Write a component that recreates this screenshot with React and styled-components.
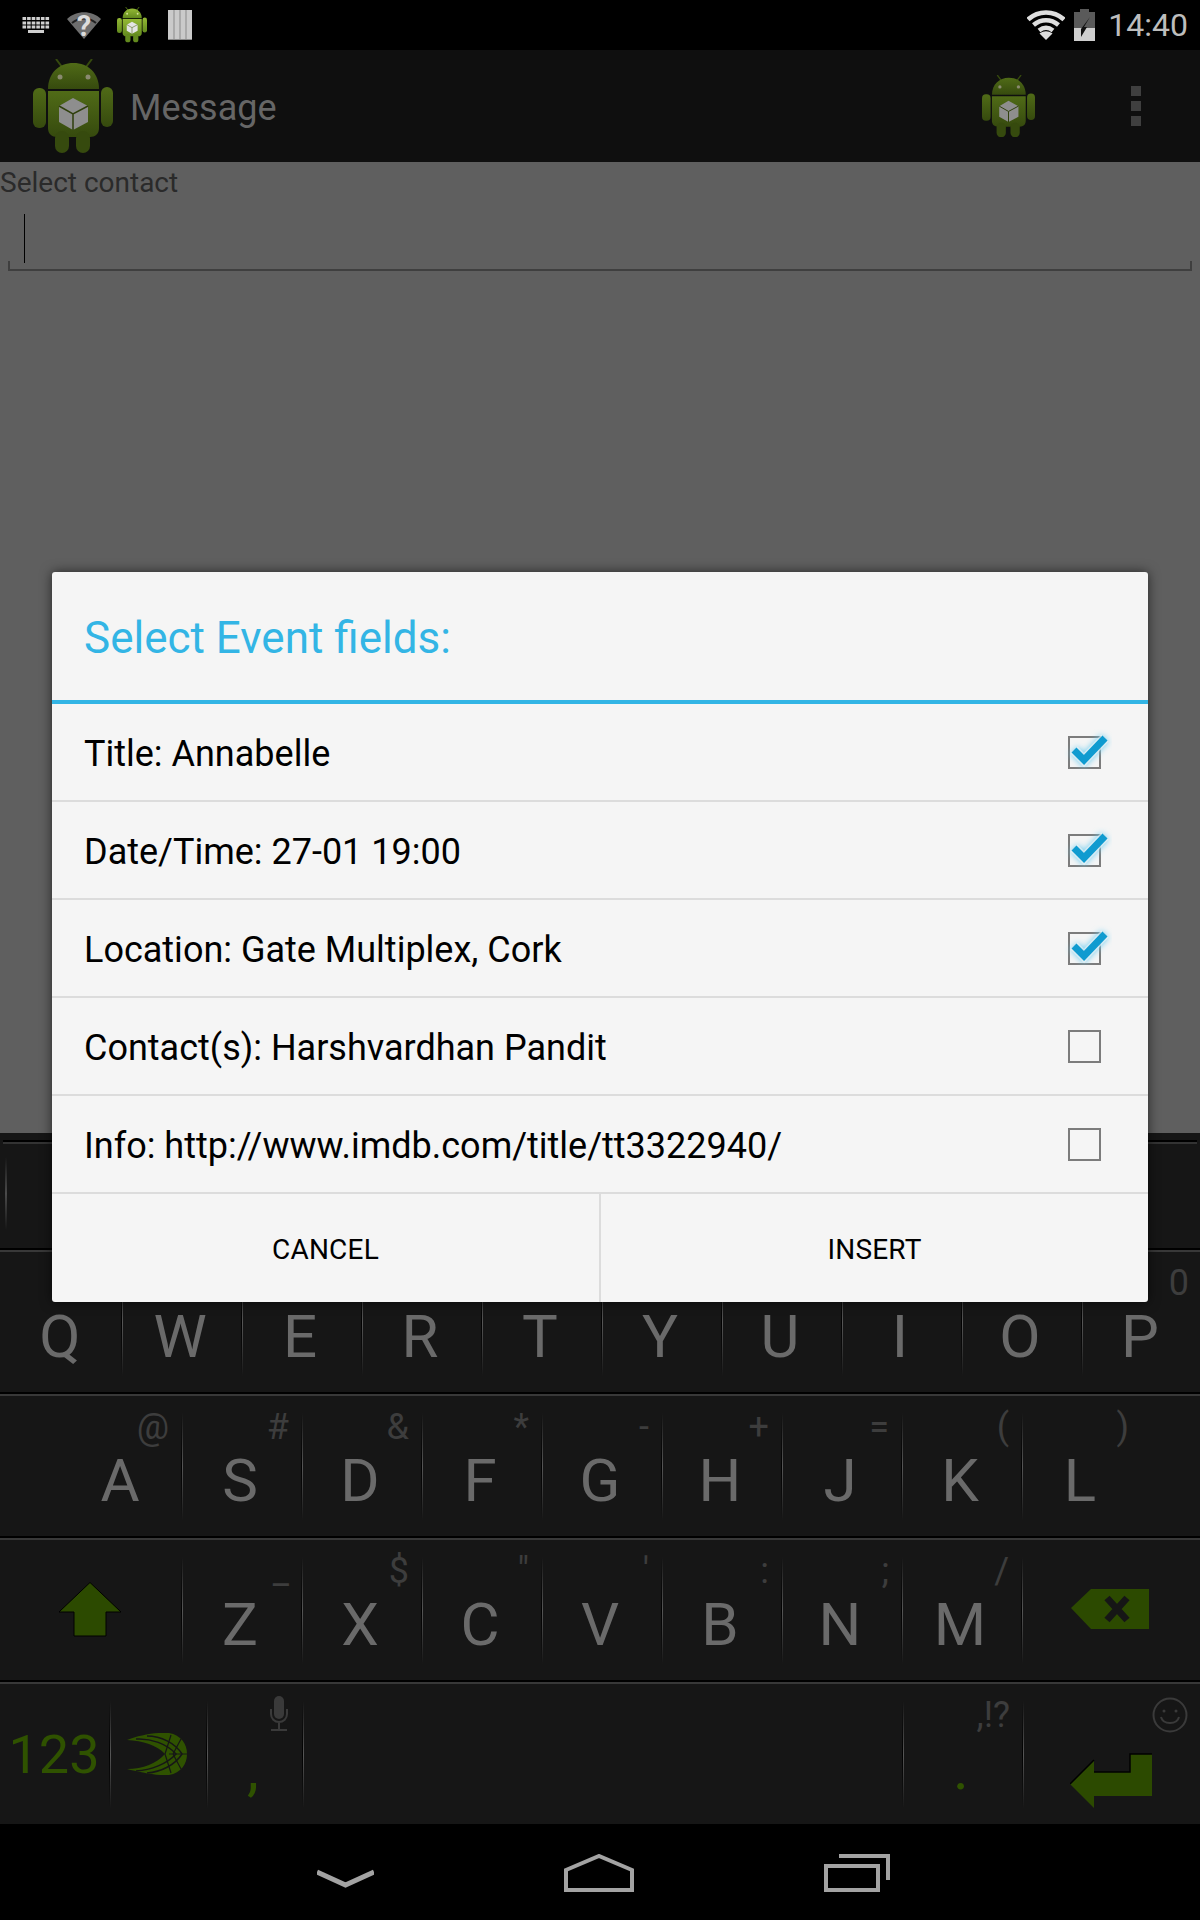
import styled, { createGlobalStyle } from 'styled-components';

const GlobalStyle = createGlobalStyle`
    html, body {
        margin: 0;
        padding: 0;
        background: #000;
        font-family: Roboto, "Liberation Sans", sans-serif;
    }
    * {
        box-sizing: border-box;
    }
`;

const Screen = styled.div`
    position: relative;
    width: 1200px;
    height: 1920px;
    overflow: hidden;
    display: flex;
    flex-direction: column;
    background: #5f5f5f;
`;

const StatusBar = styled.div`
    flex: 0 0 50px;
    background: #000;
    display: flex;
    align-items: center;
    padding: 0 12px 0 22px;
`;

const StatusIcon = styled.span`
    position: relative;
    display: flex;
    margin-left: ${(p) => p.$ml || 0}px;
`;

const UnknownMark = styled.span`
    position: absolute;
    top: -3px;
    left: 0;
    width: 100%;
    text-align: center;
    font-size: 29px;
    line-height: 34px;
    font-weight: 700;
    color: #dcdcdc;
`;

const Clock = styled.span`
    margin-left: 13px;
    font-size: 32px;
    line-height: 50px;
    color: #bdbdbd;
`;

const Spacer = styled.span`
    flex: 1;
`;

const ActionBar = styled.div`
    flex: 0 0 112px;
    background: #0f0f0f;
    display: flex;
    align-items: center;
    padding-left: 33px;
`;

const ActionTitle = styled.span`
    margin: 4px 0 0 17px;
    font-size: 36px;
    color: #666;
`;

const Overflow = styled.div`
    display: flex;
    flex-direction: column;
    gap: 5px;
    margin: 0 59px 0 96px;
`;

const OverflowDot = styled.span`
    width: 10px;
    height: 10px;
    background: #3f3f3f;
`;

const Content = styled.div`
    flex: 0 0 971px;
    background: #5f5f5f;
`;

const ContactLabel = styled.div`
    padding-top: 2px;
    font-size: 28px;
    line-height: 38px;
    color: #2a2a2a;
`;

const ContactInput = styled.div`
    position: relative;
    height: 69px;
    margin: 0 8px;
    padding: 12px 0 0 16px;
    border-bottom: 2px solid #3f3f3f;
    &::before,
    &::after {
        content: '';
        position: absolute;
        bottom: 0;
        width: 2px;
        height: 8px;
        background: #3f3f3f;
    }
    &::before {
        left: 0;
    }
    &::after {
        right: 0;
    }
`;

const Cursor = styled.span`
    display: block;
    width: 1px;
    height: 49px;
    background: #000;
`;

const Keyboard = styled.div`
    flex: 0 0 691px;
    background: #161616;
    display: flex;
    flex-direction: column;
`;

const CandidateStrip = styled.div`
    flex: 0 0 117px;
    padding-top: 7px;
`;

const CandidateLine = styled.div`
    height: 4px;
    margin: 0 3px;
    border-top: 2px solid #000;
    border-bottom: 2px solid #333;
`;

const CandidateDivider = styled.div`
    width: 2px;
    height: 73px;
    margin: 13px 0 0 5px;
    background: linear-gradient(transparent, #4a4a4a 50%, transparent);
`;

const KeyRow = styled.div`
    flex: 0 0 ${(p) => p.$h || 144}px;
    display: flex;
    border-top: 2px solid #383838;
    box-shadow: 0 -2px 0 #000;
`;

const Key = styled.div`
    position: relative;
    flex: 0 0 ${(p) => p.$w}px;
    display: flex;
    justify-content: center;
    padding-top: 55px;
    &::after {
        content: ${(p) => (p.$last ? 'none' : "''")};
        position: absolute;
        top: 17px;
        left: calc(100% + 1px);
        width: 2px;
        height: 107px;
        background:
            linear-gradient(transparent, #000 50%, transparent) 0 0 / 1px 100% no-repeat,
            linear-gradient(transparent, #565656 50%, transparent) 1px 0 / 1px 100% no-repeat;
    }
`;

const IconKey = styled(Key)`
    padding: ${(p) => p.$pt || 0}px 0 ${(p) => p.$pb || 0}px;
    align-items: center;
`;

const Letter = styled.span`
    font-size: 60px;
    line-height: 60px;
    color: ${(p) => (p.$green ? '#2f5200' : '#6a6a6a')};
`;

const NumLabel = styled.span`
    font-size: 54px;
    color: #2f5200;
`;

const Hint = styled.span`
    position: absolute;
    top: 13px;
    right: 11px;
    font-size: 36px;
    line-height: 36px;
    color: #3d3d3d;
`;

const CornerIcon = styled.span`
    position: absolute;
    display: flex;
    top: ${(p) => p.$top}px;
    right: ${(p) => p.$right}px;
`;

const NavBar = styled.div`
    flex: 0 0 96px;
    background: #000;
    display: flex;
    gap: 190px;
    padding: 30px 0 0 317px;
    align-items: flex-start;
`;

const Dialog = styled.div`
    position: absolute;
    top: 572px;
    left: 52px;
    width: 1096px;
    background: #f5f5f5;
    border-radius: 3px;
    box-shadow: 0 0 12px rgba(0, 0, 0, 0.6);
`;

const DialogTitle = styled.div`
    height: 132px;
    padding: 3px 0 0 32px;
    display: flex;
    align-items: center;
    border-bottom: 4px solid #33b5e5;
    font-size: 44px;
    color: #33b5e5;
`;

const FieldRow = styled.div`
    height: 98px;
    padding: 0 38px 0 32px;
    display: flex;
    align-items: center;
    justify-content: space-between;
    border-bottom: 2px solid #dcdcdc;
    font-size: 36px;
    color: #000;
`;

const FieldLabel = styled.span`
    padding-top: 3px;
`;

const ButtonBar = styled.div`
    height: 108px;
    display: flex;
`;

const DialogButton = styled.div`
    flex: 1;
    display: flex;
    align-items: center;
    justify-content: center;
    padding-top: 2px;
    font-size: 28px;
    letter-spacing: 0.2px;
    color: #000;
    & + & {
        border-left: 2px solid #dcdcdc;
    }
`;

const AndroidIcon = ({ width, bright, id }) => {
    const light = bright ? '#94b935' : '#506b17';
    const dark = bright ? '#638a1e' : '#364a0e';
    const cube = bright ? '#e4e4e4' : '#8e8e8e';
    const seam = bright ? '#4d6a12' : '#2f3f0c';
    return (
        <svg width={width} viewBox="0 0 80 94" style={{ display: 'block' }}>
            <defs>
                <linearGradient id={id} x1="0" y1="0" x2="0" y2="1">
                    <stop offset="0" stopColor={light} />
                    <stop offset="1" stopColor={dark} />
                </linearGradient>
            </defs>
            <path d="M23 0l6 8M59 0l-6 8" stroke={dark} strokeWidth="2" />
            <path d="M15 30c0-16 11-26 25.500-26S66 14 66 30z" fill={`url(#${id})`} />
            <circle cx="27" cy="18" r="2.500" fill={bright ? '#d4e29a' : '#8a8a70'} />
            <circle cx="55" cy="18" r="2.500" fill={bright ? '#d4e29a' : '#8a8a70'} />
            <path d="M15 32h51v37c0 6-4 9-9 9H24c-5 0-9-3-9-9z" fill={`url(#${id})`} />
            <rect x="0" y="29" width="13" height="40" rx="6" fill={`url(#${id})`} />
            <rect x="68" y="28" width="12" height="40" rx="6" fill={`url(#${id})`} />
            <rect x="22" y="72" width="14" height="22" rx="7" fill={dark} />
            <rect x="43" y="72" width="14" height="22" rx="7" fill={dark} />
            <path d="M40 39l15 8v16l-15 8-14-8V47z" fill={cube} />
            <path d="M26 47l14 8 15-8M40 55v16" fill="none" stroke={seam} strokeWidth="1.500" />
        </svg>
    );
};

const KeyboardGlyph = () => (
    <svg width="28" height="16" viewBox="0 0 28 16" fill="#cfcfcf" style={{ display: 'block' }}>
        {[0, 1, 2, 3, 4, 5].map((i) => (
            <rect key={`a${i}`} x={i * 4.6 + 0.5} y="0" width="3.600" height="3" />
        ))}
        {[0, 1, 2, 3, 4, 5].map((i) => (
            <rect key={`b${i}`} x={i * 4.6 + 0.5} y="4.500" width="3.600" height="3" />
        ))}
        {[0, 1, 2, 3, 4, 5].map((i) => (
            <rect key={`c${i}`} x={i * 4.6 + 0.5} y="8.500" width="3.600" height="3" />
        ))}
        <rect x="6" y="13" width="16" height="3" />
    </svg>
);

const WifiUnknown = () => (
    <svg width="34" height="27" viewBox="0 0 34 27" style={{ display: 'block' }}>
        <path d="M0 7C9-2 25-2 34 7L17 27z" fill="#6e6e6e" />
        <path d="M5 11C12 5 22 5 29 11" stroke="#222" strokeWidth="2" fill="none" />
    </svg>
);

const BarsGlyph = () => (
    <svg width="24" height="30" viewBox="0 0 24 30" style={{ display: 'block' }}>
        <rect width="24" height="30" fill="#cacaca" />
        <path d="M6 0v29M12 0v29M18 0v29" stroke="#8a8a8a" strokeWidth="1" />
        <rect y="29" width="24" height="1" fill="#8a8a8a" />
    </svg>
);

const WifiFull = () => (
    <svg width="38" height="30" viewBox="0 0 38 30" fill="none" stroke="#dedede" strokeWidth="4.500" style={{ display: 'block' }}>
        <path d="M1 9.500C11 0 27 0 37 9.500" />
        <path d="M6.500 15C14 8.500 24 8.500 31.500 15" />
        <path d="M12 20.500C16.500 17 21.500 17 26 20.500" />
        <path d="M12.500 23.500C17 20.500 21 20.500 25.500 23.500L19 30z" fill="#dedede" stroke="none" />
    </svg>
);

const Battery = () => (
    <svg width="21" height="32" viewBox="0 0 21 32" style={{ display: 'block' }}>
        <rect x="6" y="0" width="9" height="3" fill="#5a5a5a" />
        <rect x="0" y="3" width="21" height="16" fill="#5a5a5a" />
        <rect x="0" y="19" width="21" height="13" fill="#cfcfcf" />
        <path d="M16 8L7 20v8l6-10h-3l6-10z" fill="#111" />
    </svg>
);

const ShiftIcon = () => (
    <svg width="64" height="55" viewBox="0 0 64 55" style={{ display: 'block' }}>
        <path d="M32 0.500L63 30H48V54H16V30H1z" fill="#2c4a00" stroke="#000" strokeWidth="1" />
    </svg>
);

const BackspaceIcon = () => (
    <svg width="78" height="40" viewBox="0 0 78 40" style={{ display: 'block' }}>
        <path d="M20 0H78V40H20L0 19z" fill="#2c4a00" />
        <path d="M36 9L56 31M56 9L36 31" stroke="#161616" strokeWidth="7" />
    </svg>
);

const EnterIcon = () => (
    <svg width="82" height="55" viewBox="0 0 82 55" style={{ display: 'block' }}>
        <path d="M0 31L24 7V19H60V1H82V43H24V55z" fill="#2c4a00" />
        <path d="M0 31L24 7M24 19H60V1H82" fill="none" stroke="#000" strokeWidth="1.500" />
    </svg>
);

const SwypeLogo = () => (
    <svg width="60" height="42" viewBox="0 0 60 42" style={{ display: 'block' }}>
        <path d="M0 7C12 2 30-1 42 0C54 2 60 11 60 21C60 31 54 40 42 42C30 43 12 39 0 36C16 36 30 30 38 21C30 12 16 8 0 7z" fill="#2f5200" />
        <g fill="none" stroke="#161616" strokeWidth="1.500">
            <path d="M9 6C24 5 40 11 49 21C40 31 24 37 9 38" />
            <path d="M20 3C34 3 48 10 55 21C48 32 34 39 20 40" />
            <path d="M44 2L38 21L44 40M54 6L46 21L54 36M42 21H60" strokeWidth="1.200" />
        </g>
    </svg>
);

const MicIcon = () => (
    <svg width="18" height="35" viewBox="0 0 18 35" style={{ display: 'block' }}>
        <rect x="4" y="0" width="10" height="23" rx="5" fill="#3a3a3a" />
        <path d="M1 13v5c0 4.500 3.500 8 8 8s8-3.500 8-8v-5M9 26v7M1 34h16" fill="none" stroke="#3a3a3a" strokeWidth="2" />
    </svg>
);

const SmileyIcon = () => (
    <svg width="36" height="36" viewBox="0 0 36 36" fill="none" stroke="#3a3a3a" strokeWidth="2" style={{ display: 'block' }}>
        <circle cx="18" cy="18" r="16.500" />
        <circle cx="12" cy="14" r="1.500" fill="#3a3a3a" stroke="none" />
        <circle cx="24" cy="14" r="1.500" fill="#3a3a3a" stroke="none" />
        <path d="M9 20c2 8 16 8 18 0" />
    </svg>
);

const BackIcon = () => (
    <svg width="57" height="38" viewBox="0 0 57 38" fill="none" stroke="#a3a3a3" strokeWidth="5" style={{ display: 'block' }}>
        <path d="M0 18L28.500 31L57 18" />
    </svg>
);

const HomeIcon = () => (
    <svg width="70" height="38" viewBox="0 0 70 38" fill="none" stroke="#a3a3a3" strokeWidth="4" style={{ display: 'block' }}>
        <path d="M2 36V16L35 2L68 16V36z" />
    </svg>
);

const RecentsIcon = () => (
    <svg width="66" height="38" viewBox="0 0 66 38" fill="none" stroke="#a3a3a3" strokeWidth="4" style={{ display: 'block' }}>
        <rect x="2" y="12" width="52" height="24" />
        <path d="M15 2H64V26" />
    </svg>
);

const CheckBox = ({ checked, id }) => (
    <svg width="48" height="48" viewBox="0 0 48 48" style={{ display: 'block', marginRight: -2 }}>
        <defs>
            <filter id={id} x="-40%" y="-40%" width="180%" height="180%">
                <feGaussianBlur stdDeviation="3" />
            </filter>
        </defs>
        <rect x="5" y="9" width="31" height="31" fill="none" stroke="#7c7c7c" strokeWidth="2" />
        {checked && (
            <>
                <path d="M10 22L20 32L41 10" fill="none" stroke="#6fcdf0" strokeWidth="10" filter={`url(#${id})`} />
                <path d="M10 22L20 32L41 10" fill="none" stroke="#f5f5f5" strokeWidth="10" opacity="0.6" />
                <path d="M10 22L20 32L41 10" fill="none" stroke="#0f9bd0" strokeWidth="7" />
            </>
        )}
    </svg>
);

const fields = [
    { label: 'Title: Annabelle', checked: true },
    { label: 'Date/Time: 27-01 19:00', checked: true },
    { label: 'Location: Gate Multiplex, Cork', checked: true },
    { label: 'Contact(s): Harshvardhan Pandit', checked: false },
    { label: 'Info: http://www.imdb.com/title/tt3322940/', checked: false },
];

const topRow = ['Q', 'W', 'E', 'R', 'T', 'Y', 'U', 'I', 'O', 'P'];
const homeRow = [['A', '@'], ['S', '#'], ['D', '&'], ['F', '*'], ['G', '-'], ['H', '+'], ['J', '='], ['K', '('], ['L', ')']];
const lowRow = [['Z', '_'], ['X', '$'], ['C', '"'], ['V', "'"], ['B', ':'], ['N', ';'], ['M', '/']];

const App = () => {
    return (
        <Screen>
            <GlobalStyle />
            <StatusBar>
                <StatusIcon><KeyboardGlyph /></StatusIcon>
                <StatusIcon $ml={17}>
                    <WifiUnknown />
                    <UnknownMark>?</UnknownMark>
                </StatusIcon>
                <StatusIcon $ml={16}><AndroidIcon width={30} bright id="status-droid" /></StatusIcon>
                <StatusIcon $ml={21}><BarsGlyph /></StatusIcon>
                <Spacer />
                <WifiFull />
                <StatusIcon $ml={9}><Battery /></StatusIcon>
                <Clock>14:40</Clock>
            </StatusBar>

            <ActionBar>
                <AndroidIcon width={80} id="main-droid" />
                <ActionTitle>Message</ActionTitle>
                <Spacer />
                <AndroidIcon width={53} id="action-droid" />
                <Overflow>
                    <OverflowDot />
                    <OverflowDot />
                    <OverflowDot />
                </Overflow>
            </ActionBar>

            <Content>
                <ContactLabel>Select contact</ContactLabel>
                <ContactInput>
                    <Cursor />
                </ContactInput>
            </Content>

            <Keyboard>
                <CandidateStrip>
                    <CandidateLine />
                    <CandidateDivider />
                </CandidateStrip>
                <KeyRow>
                    {topRow.map((k, i) => (
                        <Key key={k} $w={120} $last={i === topRow.length - 1}>
                            <Letter>{k}</Letter>
                            {k === 'P' && <Hint>0</Hint>}
                        </Key>
                    ))}
                </KeyRow>
                <KeyRow>
                    <Key $w={60} $last />
                    {homeRow.map(([k, h], i) => (
                        <Key key={k} $w={120} $last={i === homeRow.length - 1}>
                            <Letter>{k}</Letter>
                            <Hint>{h}</Hint>
                        </Key>
                    ))}
                </KeyRow>
                <KeyRow>
                    <IconKey $w={180} $pb={4}><ShiftIcon /></IconKey>
                    {lowRow.map(([k, h]) => (
                        <Key key={k} $w={120}>
                            <Letter>{k}</Letter>
                            <Hint>{h}</Hint>
                        </Key>
                    ))}
                    <IconKey $w={180} $pb={4} $last><BackspaceIcon /></IconKey>
                </KeyRow>
                <KeyRow $h={142}>
                    <IconKey $w={108}><NumLabel>123</NumLabel></IconKey>
                    <IconKey $w={97}><SwypeLogo /></IconKey>
                    <Key $w={96}>
                        <Letter $green>,</Letter>
                        <CornerIcon $top={12} $right={13}><MicIcon /></CornerIcon>
                    </Key>
                    <Key $w={600} />
                    <Key $w={120}>
                        <Letter $green>.</Letter>
                        <Hint>,!?</Hint>
                    </Key>
                    <IconKey $w={179} $pt={52} $last>
                        <EnterIcon />
                        <CornerIcon $top={13} $right={12}><SmileyIcon /></CornerIcon>
                    </IconKey>
                </KeyRow>
            </Keyboard>

            <NavBar>
                <BackIcon />
                <HomeIcon />
                <RecentsIcon />
            </NavBar>

            <Dialog>
                <DialogTitle>Select Event fields:</DialogTitle>
                {fields.map((f, i) => (
                    <FieldRow key={f.label}>
                        <FieldLabel>{f.label}</FieldLabel>
                        <CheckBox checked={f.checked} id={`glow-${i}`} />
                    </FieldRow>
                ))}
                <ButtonBar>
                    <DialogButton>CANCEL</DialogButton>
                    <DialogButton>INSERT</DialogButton>
                </ButtonBar>
            </Dialog>
        </Screen>
    );
};

export default App;
